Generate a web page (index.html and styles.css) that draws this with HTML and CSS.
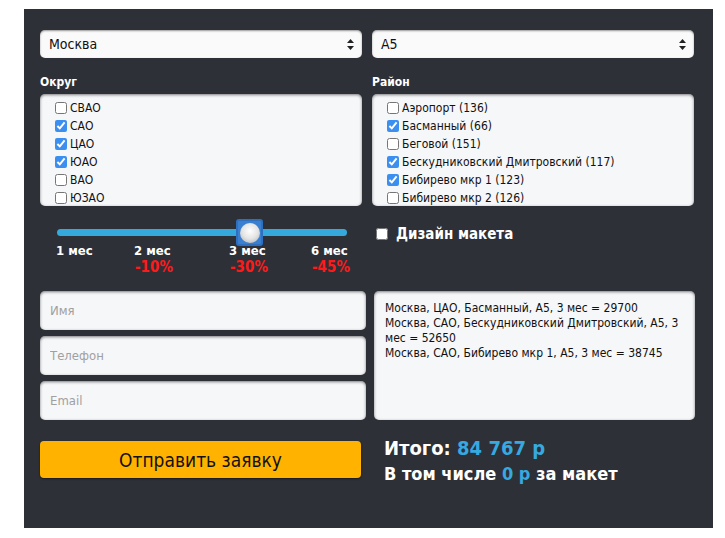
FILE: index.html
```html
<!DOCTYPE html>
<html lang="ru">
<head>
    <meta charset="UTF-8">
    <title>Расчёт размещения</title>
    <link rel="stylesheet" href="styles.css">
</head>
<body>
    <div class="panel">
        <div class="top-grid">
            <div class="select-box">
                <span>Москва</span>
                <svg class="arrows" width="7" height="11" viewBox="0 0 7 11"><path d="M3.5 0 L7 4 H0 Z M3.5 11 L7 7 H0 Z" fill="#222"/></svg>
            </div>
            <div class="select-box">
                <span>А5</span>
                <svg class="arrows" width="7" height="11" viewBox="0 0 7 11"><path d="M3.5 0 L7 4 H0 Z M3.5 11 L7 7 H0 Z" fill="#222"/></svg>
            </div>

            <div>
                <div class="field-label">Округ</div>
                <div class="check-list">
                    <label><input type="checkbox"> СВАО</label>
                    <label><input type="checkbox" checked> САО</label>
                    <label><input type="checkbox" checked> ЦАО</label>
                    <label><input type="checkbox" checked> ЮАО</label>
                    <label><input type="checkbox"> ВАО</label>
                    <label><input type="checkbox"> ЮЗАО</label>
                </div>
            </div>
            <div>
                <div class="field-label">Район</div>
                <div class="check-list">
                    <label><input type="checkbox"> Аэропорт (136)</label>
                    <label><input type="checkbox" checked> Басманный (66)</label>
                    <label><input type="checkbox"> Беговой (151)</label>
                    <label><input type="checkbox" checked> Бескудниковский Дмитровский (117)</label>
                    <label><input type="checkbox" checked> Бибирево мкр 1 (123)</label>
                    <label><input type="checkbox"> Бибирево мкр 2 (126)</label>
                </div>
            </div>

            <div class="period">
                <div class="track">
                    <div class="thumb"><div class="knob"></div></div>
                </div>
                <div class="ticks">
                    <div class="tick t1">1 мес</div>
                    <div class="tick t2">2 мес<span class="off">-10%</span></div>
                    <div class="tick t3">3 мес<span class="off">-30%</span></div>
                    <div class="tick t4">6 мес<span class="off">-45%</span></div>
                </div>
            </div>
            <div class="design">
                <label><input type="checkbox"> Дизайн макета</label>
            </div>
        </div>

        <div class="bottom-grid">
            <div class="inputs">
                <input type="text" placeholder="Имя">
                <input type="text" placeholder="Телефон">
                <input type="text" placeholder="Email">
            </div>
            <div class="summary">Москва, ЦАО, Басманный, А5, 3 мес = 29700<br>Москва, САО, Бескудниковский Дмитровский, А5, 3 мес = 52650<br>Москва, САО, Бибирево мкр 1, А5, 3 мес = 38745</div>

            <button class="send">Отправить заявку</button>
            <div class="total">
                <div class="sum">Итого: <span class="blue">84 767 р</span></div>
                <div class="sub">В том числе <span class="blue">0 р</span> за макет</div>
            </div>
        </div>
    </div>
</body>
</html>
```
FILE: styles.css
```css
body {
    margin: 0;
    background: #fff;
    font-family: "DejaVu Sans Condensed", "DejaVu Sans", Verdana, sans-serif;
}
.panel {
    margin: 9px 0 0 24px;
    width: 689px;
    height: 519px;
    box-sizing: border-box;
    padding: 21px 19px 0 16px;
    background: #2e3038;
}
.top-grid {
    display: grid;
    grid-template-columns: 322px 322px;
    column-gap: 10px;
}
.select-box {
    height: 28px;
    box-sizing: border-box;
    background: #fafafa;
    border-radius: 5px;
    box-shadow: inset 0 1px 2px rgba(0,0,0,0.4);
    display: flex;
    align-items: center;
    justify-content: space-between;
    padding: 0 8px 0 9px;
    font-size: 14px;
    color: #111;
}
.field-label {
    color: #fff;
    font-size: 12px;
    font-weight: bold;
    margin: 17px 0 5px;
    line-height: 14px;
}
.check-list {
    height: 112px;
    overflow: hidden;
    box-sizing: border-box;
    background: #f6f7f9;
    border-radius: 5px;
    box-shadow: inset 0 1px 3px rgba(0,0,0,0.5);
    padding: 5px 0 0 15px;
}
.check-list label {
    display: flex;
    align-items: center;
    height: 18px;
    font-size: 12px;
    color: #111;
    gap: 3px;
}
.check-list input,
.design input {
    margin: 0;
    width: 12px;
    height: 12px;
    accent-color: #3b8ff0;
}
.period {
    padding: 23px 0 0 17px;
    height: 84px;
    box-sizing: border-box;
}
.track {
    position: relative;
    width: 290px;
    height: 7px;
    border-radius: 4px;
    background: #35a9dc;
}
.thumb {
    position: absolute;
    left: 179px;
    top: -10px;
    width: 27px;
    height: 27px;
    box-sizing: border-box;
    border: 2px solid #2f6fc0;
    border-radius: 3px;
    background: #3a7fd0;
    display: flex;
    align-items: center;
    justify-content: center;
}
.knob {
    width: 20px;
    height: 20px;
    border-radius: 50%;
    background: radial-gradient(circle at 50% 40%, #fff 0, #e4e4e4 50%, #a9a9a9 100%);
}
.ticks {
    display: flex;
    margin-top: 7px;
    color: #fff;
    font-size: 13px;
    font-weight: bold;
}
.tick {
    display: flex;
    flex-direction: column;
    line-height: 16px;
}
.t1 { width: 78px; margin-left: -1px; }
.t2 { width: 95px; }
.t3 { width: 82px; }
.off {
    color: #ff1a1a;
    font-size: 15px;
    padding-left: 1px;
}
.design {
    padding: 19px 0 0 4px;
}
.design label {
    display: flex;
    align-items: center;
    gap: 8px;
    color: #fff;
    font-size: 15px;
    font-weight: bold;
}
.bottom-grid {
    display: grid;
    grid-template-columns: 326px 321px;
    column-gap: 8px;
    margin-top: 1px;
}
.inputs {
    display: flex;
    flex-direction: column;
    gap: 6px;
}
.inputs input {
    height: 39px;
    box-sizing: border-box;
    border: none;
    border-radius: 5px;
    background: #f6f7f9;
    box-shadow: inset 0 1px 3px rgba(0,0,0,0.5);
    padding: 0 10px;
    font-family: inherit;
    font-size: 13px;
}
.inputs input::placeholder {
    color: #a0a0a0;
}
.summary {
    height: 129px;
    box-sizing: border-box;
    background: #f6f7f9;
    border-radius: 5px;
    box-shadow: inset 0 1px 3px rgba(0,0,0,0.5);
    padding: 10px 11px;
    font-size: 12px;
    line-height: 15px;
    color: #111;
}
.send {
    margin-top: 21px;
    width: 321px;
    height: 37px;
    border: none;
    border-radius: 4px;
    background: #ffb300;
    font-family: inherit;
    font-size: 19px;
    color: #111;
    box-shadow: 0 1px 2px rgba(0,0,0,0.5);
}
.total {
    margin-top: 15px;
    padding-left: 10px;
    color: #fff;
    font-weight: bold;
}
.sum {
    font-size: 20px;
    line-height: 26px;
}
.sub {
    font-size: 18px;
    line-height: 26px;
}
.blue {
    color: #36a9e0;
}
```
